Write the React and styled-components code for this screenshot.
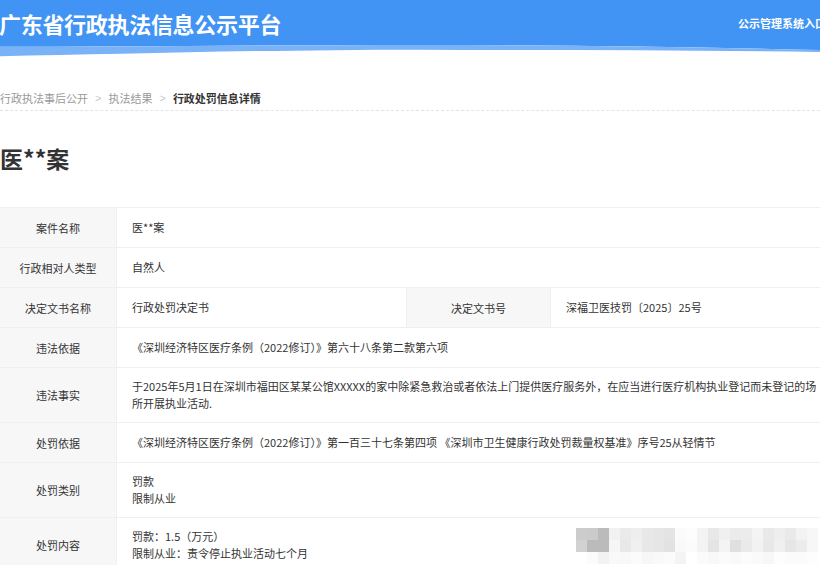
import React from "react";
import styled, { createGlobalStyle } from "styled-components";

const GlobalStyle = createGlobalStyle`
  html, body {
    margin: 0;
    padding: 0;
    overflow: hidden;
    background: #fff;
  }
  body {
    font-family: "Noto Sans CJK SC", "Noto Sans", "Liberation Sans", sans-serif;
    color: #333;
  }
`;

const rows = [
  { label: "案件名称", value: ["医**案"] },
  { label: "行政相对人类型", value: ["自然人"] },
  {
    label: "决定文书名称",
    value: ["行政处罚决定书"],
    label2: "决定文书号",
    value2: ["深福卫医技罚〔2025〕25号"],
  },
  { label: "违法依据", value: ["《深圳经济特区医疗条例（2022修订）》第六十八条第二款第六项"] },
  {
    label: "违法事实",
    value: [
      "于2025年5月1日在深圳市福田区某某公馆XXXXX的家中除紧急救治或者依法上门提供医疗服务外，在应当进行医疗机构执业登记而未登记的场",
      "所开展执业活动.",
    ],
  },
  {
    label: "处罚依据",
    value: ["《深圳经济特区医疗条例（2022修订）》第一百三十七条第四项 《深圳市卫生健康行政处罚裁量权基准》序号25从轻情节"],
  },
  { label: "处罚类别", value: ["罚款", "限制从业"] },
  { label: "处罚内容", value: ["罚款：1.5（万元）", "限制从业：责令停止执业活动七个月"] },
];

const mosaic = [
  "cccbbbf2eaeee8e6e4fbfdf3e8f0ebecf4e9eee9f3f7",
  "d2bbbbf6e8f0e8e6e2f9fbf3e4f4e0eaf2e8f0e6ecf7",
  "fffbf2f9f8fbf7f9fbf4fffbf8fbf9fcfaf7fdfbfbfd",
];

const App = () => {
  return (
    <Page>
      <GlobalStyle />
      <Header>
        <HeaderBar>
          <SiteTitle>广东省行政执法信息公示平台</SiteTitle>
          <EntryLink>公示管理系统入口</EntryLink>
        </HeaderBar>
        <Wave viewBox="0 0 840 14" preserveAspectRatio="none">
          <path d="M0 0 H840 V6 C700 2 560 0 420 0 C260 0 120 2 0 2 Z" fill="#4194f3" />
          <path
            d="M0 2 C120 2 260 0 420 0 C560 0 700 2 840 6 V8 C700 5 560 6 420 5 C260 5 120 10 0 12 Z"
            fill="#79b2f6"
          />
        </Wave>
      </Header>

      <Breadcrumb>
        <Crumb>行政执法事后公开</Crumb>
        <Sep>&gt;</Sep>
        <Crumb>执法结果</Crumb>
        <Sep>&gt;</Sep>
        <Crumb $current>行政处罚信息详情</Crumb>
      </Breadcrumb>

      <CaseTitle>医**案</CaseTitle>

      <Table>
        {rows.map((row) => (
          <Row key={row.label}>
            <LabelCell $width={117}>{row.label}</LabelCell>
            <ValueCell $grow={!row.label2} $width={row.label2 ? 290 : 0}>
              {row.value.map((line) => (
                <Line key={line}>{line}</Line>
              ))}
            </ValueCell>
            {row.label2 && (
              <>
                <LabelCell $width={144}>{row.label2}</LabelCell>
                <ValueCell $grow>
                  {row.value2.map((line) => (
                    <Line key={line}>{line}</Line>
                  ))}
                </ValueCell>
              </>
            )}
          </Row>
        ))}
      </Table>

      <Mosaic>
        {mosaic.map((r, ri) => (
          <MosaicRow key={ri}>
            {r.match(/../g).map((c, ci) => (
              <Tile key={ci} style={{ background: `#${c}${c}${c}` }} />
            ))}
          </MosaicRow>
        ))}
      </Mosaic>
    </Page>
  );
};

export default App;

const Page = styled.div`
  position: relative;
  width: 840px;
  height: 565px;
  overflow: hidden;
`;

const Header = styled.header`
  display: flex;
  flex-direction: column;
`;

const HeaderBar = styled.div`
  display: flex;
  justify-content: space-between;
  align-items: center;
  height: 45px;
  background: #4194f3;
  color: #fff;
`;

const SiteTitle = styled.h1`
  margin: 0 0 0 -1px;
  font-size: 22px;
  font-weight: 700;
  letter-spacing: -0.3px;
  line-height: 30px;
`;

const EntryLink = styled.span`
  font-size: 11px;
  font-weight: 700;
  margin-right: 14px;
`;

const Wave = styled.svg`
  display: block;
  width: 840px;
  height: 13px;
`;

const Breadcrumb = styled.nav`
  display: flex;
  align-items: center;
  margin-top: 30px;
  padding-bottom: 2px;
  height: 20px;
  border-bottom: 1px dashed #e4e4e4;
  font-size: 11px;
  line-height: 20px;
`;

const Crumb = styled.span`
  color: ${({ $current }) => ($current ? "#333" : "#999")};
  font-weight: ${({ $current }) => ($current ? 700 : 400)};
`;

const Sep = styled.span`
  color: #c8c8c8;
  margin: 0 7px;
  font-family: "Liberation Sans", sans-serif;
  font-size: 11px;
`;

const CaseTitle = styled.h2`
  margin: 31px 0 33px 0;
  font-size: 23px;
  font-weight: 700;
  line-height: 32px;
  color: #333;
`;

const Table = styled.div`
  display: flex;
  flex-direction: column;
  border-top: 1px solid #efefef;
  width: 836px;
`;

const Row = styled.div`
  display: flex;
  min-height: 40px;
  box-sizing: border-box;
  border-bottom: 1px solid #efefef;
`;

const LabelCell = styled.div`
  flex: 0 0 ${({ $width }) => $width}px;
  box-sizing: border-box;
  display: flex;
  align-items: center;
  justify-content: center;
  background: #f7f7f7;
  font-size: 11px;
  color: #333;
  border-right: 1px solid #efefef;
`;

const ValueCell = styled.div`
  flex: ${({ $grow, $width }) => ($grow ? "1 1 0" : `0 0 ${$width}px`)};
  box-sizing: border-box;
  display: flex;
  flex-direction: column;
  justify-content: center;
  padding: 10px 16px 10px 15px;
  font-size: 11px;
  line-height: 17px;
  color: #333;
  border-right: 1px solid #efefef;
`;

const Line = styled.div`
  white-space: nowrap;
`;

const Mosaic = styled.div`
  position: absolute;
  left: 576px;
  top: 528px;
  display: flex;
  flex-direction: column;
  pointer-events: none;
`;

const MosaicRow = styled.div`
  display: flex;
`;

const Tile = styled.div`
  width: 11px;
  height: 12px;
`;
